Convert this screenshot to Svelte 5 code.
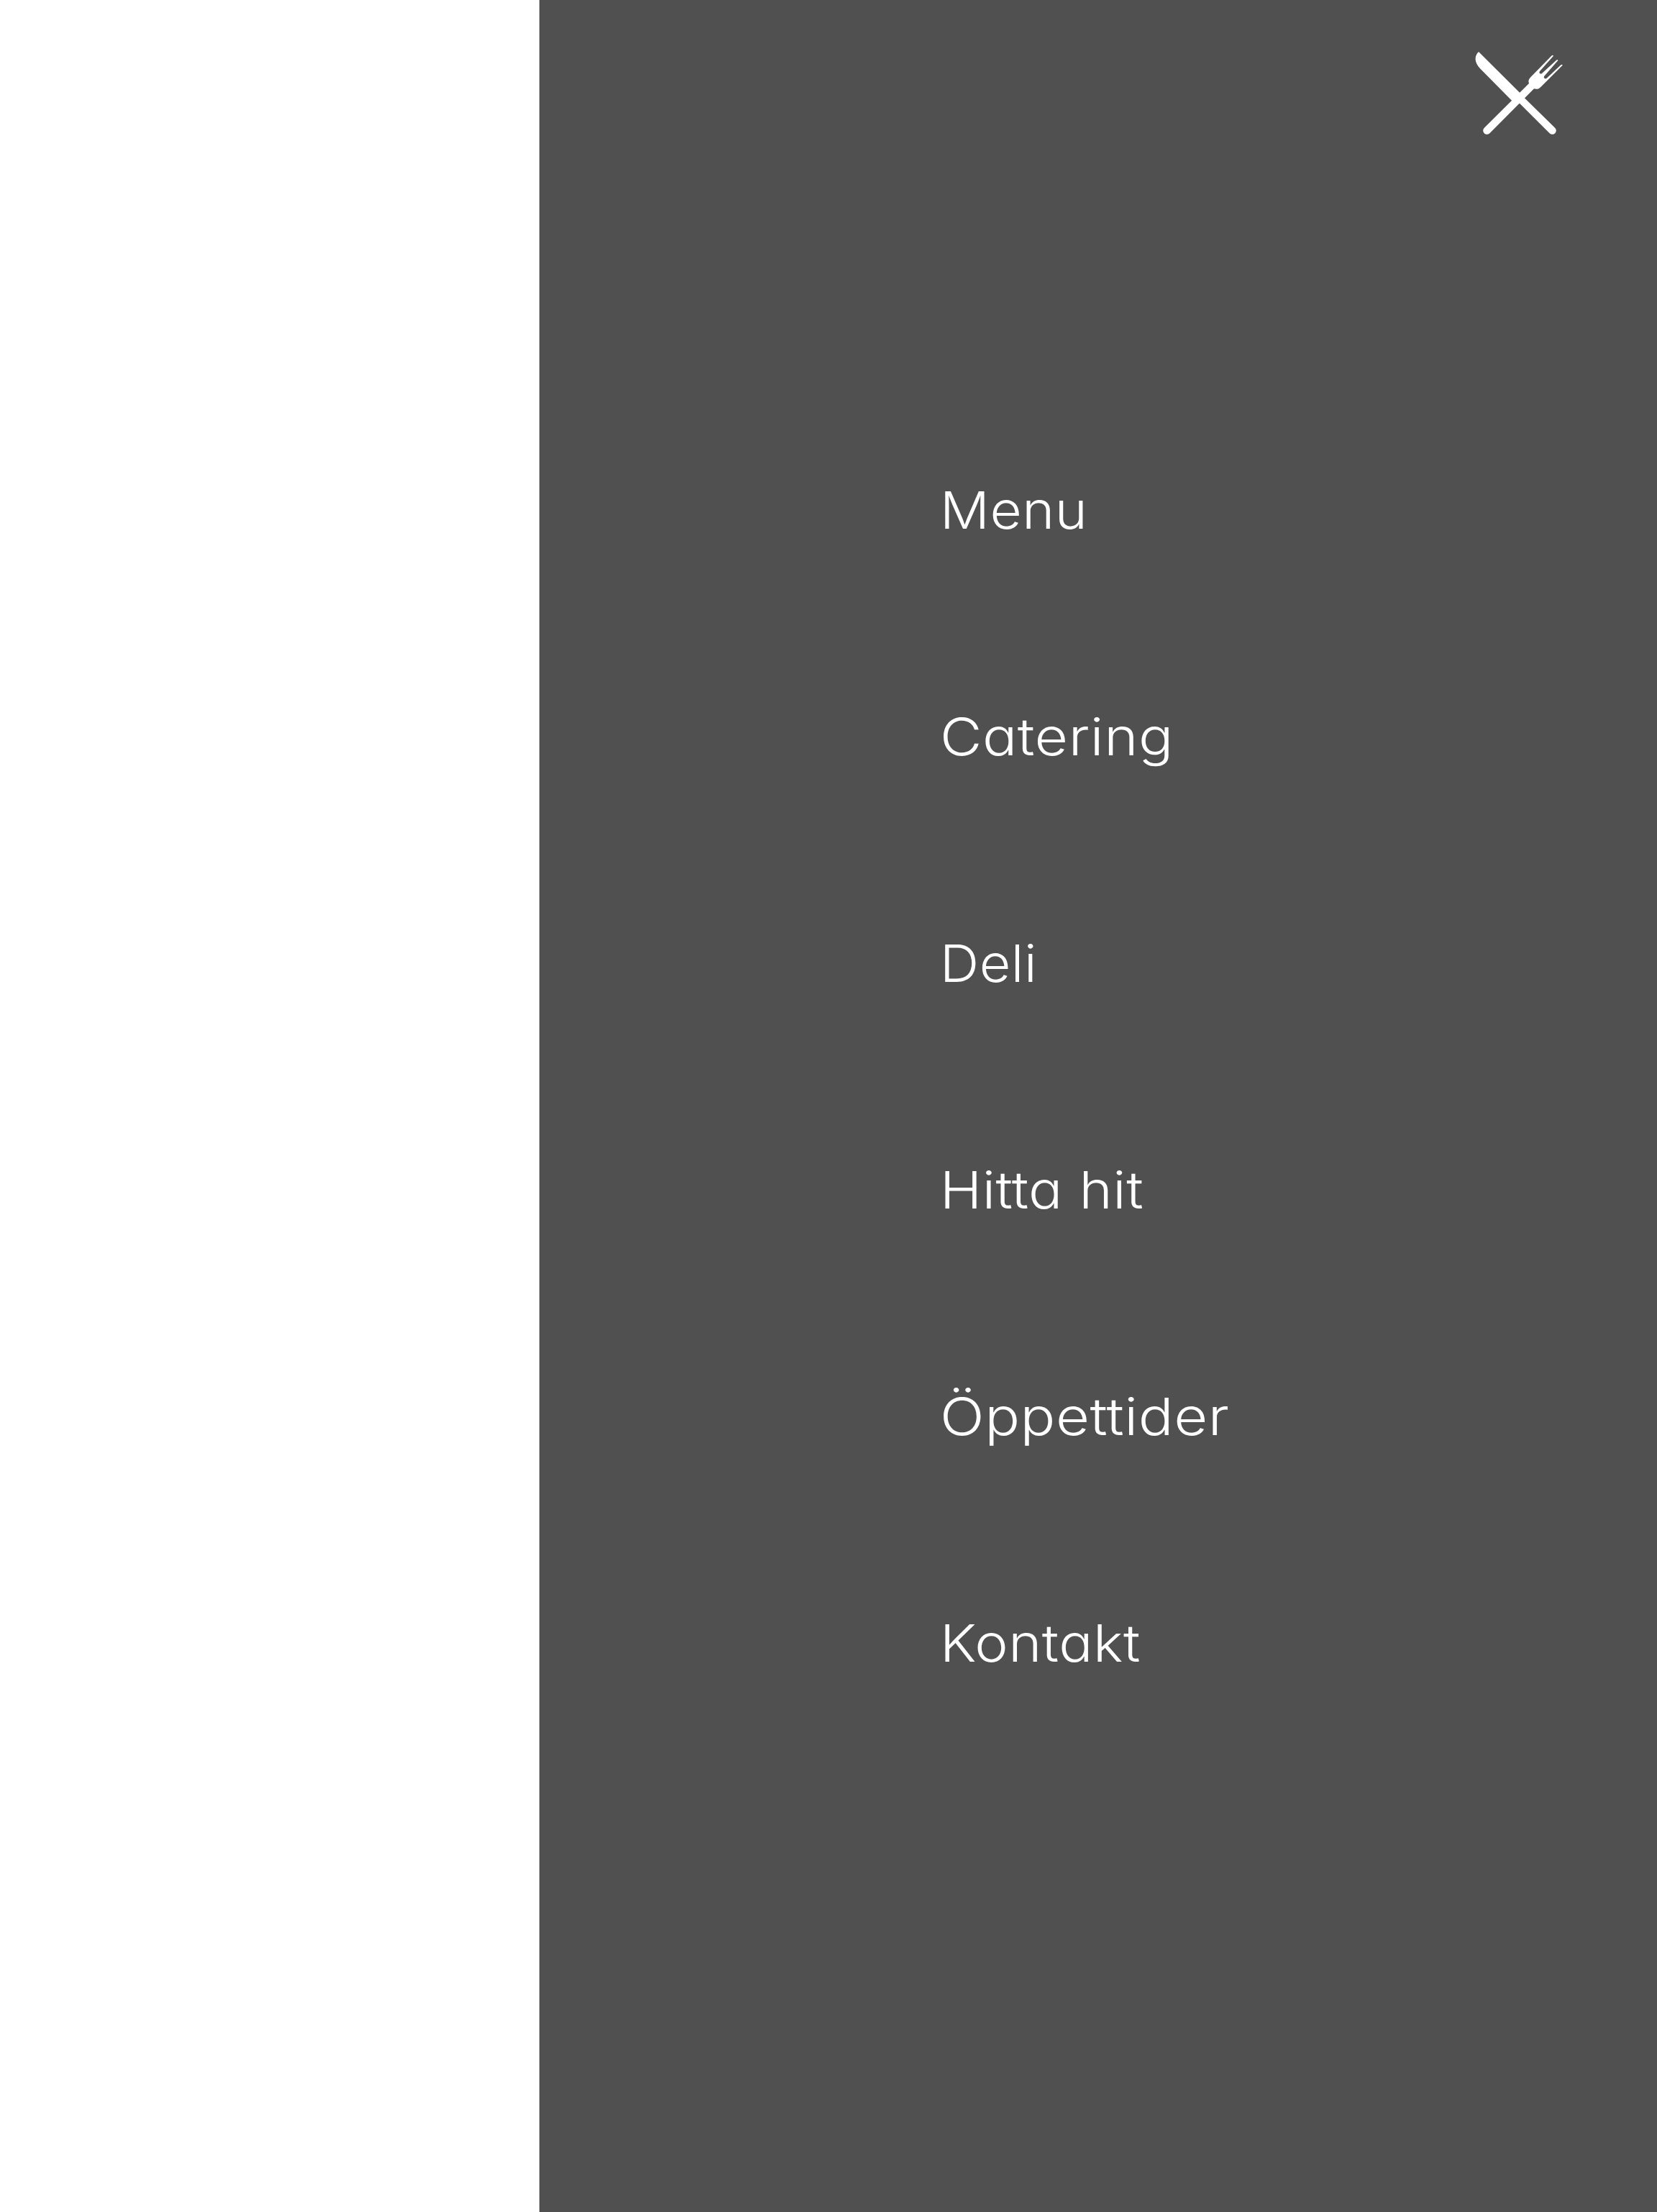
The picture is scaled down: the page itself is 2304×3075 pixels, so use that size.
<script>
  // stretch widens the letterforms of each label horizontally
  const links = [
    { label: 'Menu', stretch: 1.062 },
    { label: 'Catering', stretch: 1.114 },
    { label: 'Deli', stretch: 1.046 },
    { label: 'Hitta hit', stretch: 1.091 },
    { label: 'Öppettider', stretch: 1.127 },
    { label: 'Kontakt', stretch: 1.089 }
  ];
</script>

<div class="page">
  <aside class="drawer">
    <header>
      <button class="close" aria-label="Stäng">
        <svg viewBox="0 0 510 480" fill="#fff" aria-hidden="true">
          <!-- knife -->
          <path d="M78 66L249 236L271 260L397.3 383.7A16 16 0 0 1 374.7 406.3L249 281L216 269L84 136C60 110 59 84 78 66Z" />
          <!-- fork -->
          <path d="M100.7 383.7L288 198C284 188 287 180 295 172L383 82Q388 78 390 83L333 147C328 154 336 161 342 156L402 101Q407 97 409 102L352 167C347 174 355 181 362 176L421 121Q426 117 428 122L337 213C329 222 319 223 309 220L123.3 406.3A16 16 0 0 1 100.7 383.7Z" />
        </svg>
      </button>
    </header>
    <nav>
      {#each links as link}
        <a href="#top" style:transform="scaleX({link.stretch})">{link.label}</a>
      {/each}
    </nav>
  </aside>
</div>

<style>
  :global(body) { margin: 0; background: #fff; }
  .page { display: flex; justify-content: flex-end; height: 3075px; }
  .drawer { width: 1554px; background: #505050; }
  header { display: flex; justify-content: flex-end; box-sizing: border-box; height: 210px; padding: 50px 104px 0 0; }
  .close { width: 170px; height: 160px; padding: 0; border: 0; background: none; }
  svg { display: block; width: 170px; height: 160px; }
  nav { display: flex; flex-direction: column; align-items: flex-start; padding: 341px 0 0 556.5px; }
  a {
    color: #fff;
    font: 335 72px/315px Inter, 'Open Sans', sans-serif;
    font-feature-settings: 'cv11' 1, 'calt' 0;
    font-variant-ligatures: none;
    letter-spacing: 0.5px;
    text-decoration: none;
    transform-origin: left center;
    white-space: nowrap;
  }
</style>
